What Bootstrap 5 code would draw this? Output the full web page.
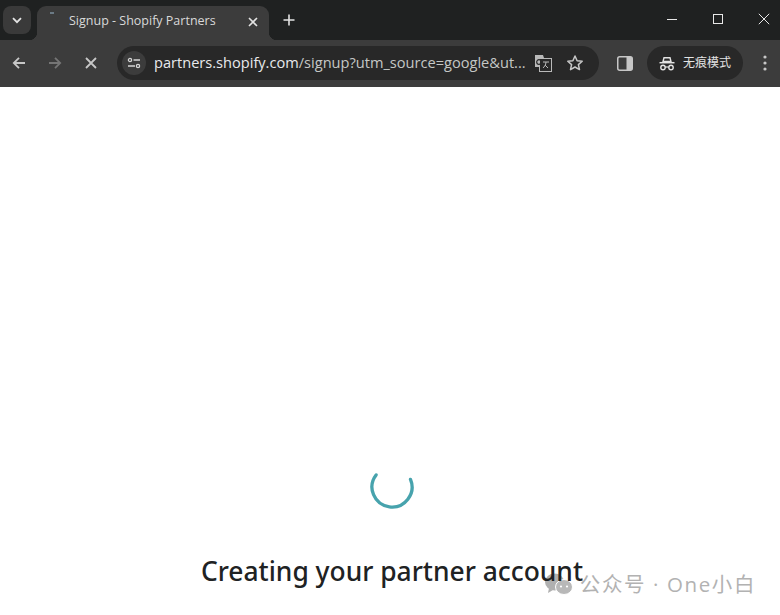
<!DOCTYPE html>
<html lang="en">
<head>
    <meta charset="UTF-8">
    <title>Signup - Shopify Partners</title>
    <link href="https://cdn.jsdelivr.net/npm/bootstrap@5.3.0/dist/css/bootstrap.min.css" rel="stylesheet">
    <style>
        html, body { height: 615px; overflow: hidden; background: #fff; }
        body { font-family: "Open Sans", "Noto Sans", "Noto Sans CJK SC", sans-serif; }
        svg { display: block; flex: none; }
        .tabstrip { height: 40px; background: #1f2121; padding-left: 3px; }
        .tab-search { width: 28px; height: 28px; margin-top: 6px; margin-right: 6px; border-radius: 8px; background: #3a3a3a; }
        .tab { width: 232px; height: 34px; margin-top: 6px; padding: 0 10px 3px 32px; background: #3c3c3c; border-radius: 9px 9px 0 0; color: #d9d9d9; font-size: 12.5px; }
        .tab::before, .tab::after { content: ""; position: absolute; bottom: 0; width: 8px; height: 8px; }
        .tab::before { left: -8px; background: radial-gradient(circle at 0 0, #1f2121 8px, #3c3c3c 8.5px); }
        .tab::after { right: -8px; background: radial-gradient(circle at 100% 0, #1f2121 8px, #3c3c3c 8.5px); }
        .tab-dash { left: 13px; top: 6px; width: 4px; height: 2px; background: #6b7a85; }
        .new-tab { height: 28px; margin-left: 9px; margin-top: 6px; }
        .win-btns { margin-right: -7px; }
        .win-btn { width: 46px; height: 38px; }
        .toolbar { height: 47px; padding: 0 0 1px 1px; background: #3c3c3c; }
        .toolbar > * { flex: none; }
        .nav-btn { width: 36px; height: 46px; }
        .omnibox { width: 482px; height: 34px; margin-left: 8px; padding: 0 15px 0 5px; border-radius: 17px; background: #282828; }
        .site-chip { width: 24px; height: 24px; border-radius: 50%; background: #3c3c3c; margin-right: 8px; }
        .url { width: 376px; font-size: 14.6px; white-space: nowrap; color: #c4c7c5; }
        .url b { font-weight: 400; color: #e8eaed; }
        .side-btn { width: 48px; padding-left: 4px; }
        .incognito { width: 96px; height: 34px; border-radius: 17px; background: #282828; padding-left: 12px; color: #e3e3e3; font-size: 12px; }
        .menu-btn { width: 44px; }
        .page { height: 528px; padding-top: 378px; }
        .spinner-wrap { height: 44px; margin-left: 4px; }
        .title { position: relative; z-index: 1; margin: 44px 0 0 4px; font-family: "Noto Sans", sans-serif; font-size: 26.4px; font-weight: 500; line-height: 36px; color: #202223; }
        .watermark { right: 24px; bottom: 17px; color: #b2b2b2; font-size: 20.5px; line-height: 28px; letter-spacing: 1.6px; }
    </style>
</head>
<body>
<div class="tabstrip d-flex">
    <div class="tab-search d-flex align-items-center justify-content-center">
        <svg width="12" height="12" viewBox="0 0 12 12" fill="none" stroke="#e3e3e3" stroke-width="1.8"><path d="M2 4.2 6 8.2l4-4"/></svg>
    </div>
    <div class="tab position-relative d-flex align-items-center justify-content-between">
        <span class="tab-dash position-absolute"></span>
        <span>Signup - Shopify Partners</span>
        <svg width="12" height="12" viewBox="0 0 12 12" stroke="#e3e3e3" stroke-width="1.6"><path d="M2 2l8 8M10 2l-8 8"/></svg>
    </div>
    <div class="new-tab d-flex align-items-center">
        <svg class="ms-1" width="14" height="14" viewBox="0 0 14 14" stroke="#e3e3e3" stroke-width="1.6"><path d="M7 1.5v11M1.5 7h11"/></svg>
    </div>
    <div class="win-btns ms-auto d-flex">
        <div class="win-btn d-flex align-items-center justify-content-center"><svg width="12" height="12" viewBox="0 0 12 12" stroke="#e8e8e8" stroke-width="1"><path d="M1 6.5h10"/></svg></div>
        <div class="win-btn d-flex align-items-center justify-content-center"><svg width="12" height="12" viewBox="0 0 12 12" fill="none" stroke="#e8e8e8" stroke-width="1"><rect x="1.5" y="1.5" width="9" height="9"/></svg></div>
        <div class="win-btn d-flex align-items-center justify-content-center"><svg width="12" height="12" viewBox="0 0 12 12" stroke="#e8e8e8" stroke-width="1"><path d="M.8.8l10.4 10.4M11.2.8.8 11.2"/></svg></div>
    </div>
</div>
<div class="toolbar d-flex align-items-center">
    <div class="nav-btn d-flex align-items-center justify-content-center"><svg width="14" height="14" viewBox="0 0 14 14" fill="none" stroke="#c7c7c7" stroke-width="1.8"><path d="M13 7H2M7 1.8 1.800 7 7 12.200"/></svg></div>
    <div class="nav-btn d-flex align-items-center justify-content-center"><svg width="14" height="14" viewBox="0 0 14 14" fill="none" stroke="#757575" stroke-width="1.8"><path d="M1 7h11M7 1.800 12.200 7 7 12.200"/></svg></div>
    <div class="nav-btn d-flex align-items-center justify-content-center"><svg width="12" height="12" viewBox="0 0 12 12" stroke="#c7c7c7" stroke-width="1.8"><path d="M1 1l10 10M11 1 1 11"/></svg></div>
    <div class="omnibox d-flex align-items-center">
        <div class="site-chip d-flex align-items-center justify-content-center">
            <svg width="14" height="12" viewBox="0 0 14 12" fill="none" stroke="#d5d5d5" stroke-width="1.3"><circle cx="3" cy="3" r="1.6"/><path d="M6.5 3H13M1 9h7"/><circle cx="11" cy="9" r="1.6"/></svg>
        </div>
        <div class="url"><b>partners.shopify.com</b>/signup?utm_source=google&amp;ut...</div>
        <svg class="ms-1" width="18" height="18" viewBox="0 0 18 18"><path d="M1 1h8l1 3v9H1z" fill="#b9b9b9"/><rect x="5.5" y="4.5" width="12" height="13" fill="#282828" stroke="#b9b9b9"/><circle cx="5" cy="8" r="2.3" fill="none" stroke="#282828" stroke-width="1.2"/><path d="M9 8h6M12 8c0 3-2 5-3 6M11 11l3 3" fill="none" stroke="#b9b9b9"/></svg>
        <svg class="ms-auto" width="18" height="18" viewBox="0 0 18 18" fill="none" stroke="#c7c7c7" stroke-width="1.5" stroke-linejoin="round"><path d="M9 2l2.100 4.700 5.100.5-3.800 3.400 1.100 5L9 13l-4.500 2.600 1.100-5L1.800 7.200l5.100-.5z"/></svg>
    </div>
    <div class="side-btn d-flex align-items-center justify-content-center">
        <svg width="16" height="15" viewBox="0 0 16 15"><rect x=".75" y=".75" width="14.5" height="13.5" rx="2" fill="none" stroke="#c7c7c7" stroke-width="1.5"/><path d="M9.500 1H14a1 1 0 0 1 1 1v11a1 1 0 0 1-1 1H9.500z" fill="#c7c7c7"/></svg>
    </div>
    <div class="incognito d-flex align-items-center gap-2">
        <svg width="16" height="15" viewBox="0 0 16 15" fill="none" stroke="#e3e3e3"><path d="M5 1.700h6l1 3.800H4z" stroke-width="1.400"/><path d="M.5 6.700h15" stroke-width="1.500"/><circle cx="4" cy="11.500" r="2.200" stroke-width="1.400"/><circle cx="12" cy="11.500" r="2.200" stroke-width="1.400"/><path d="M6.200 11h3.600" stroke-width="1.200"/></svg>
        <span>无痕模式</span>
    </div>
    <div class="menu-btn d-flex justify-content-center">
        <svg width="4" height="16" viewBox="0 0 4 16" fill="#c7c7c7"><circle cx="2" cy="2" r="1.6"/><circle cx="2" cy="8" r="1.6"/><circle cx="2" cy="14" r="1.6"/></svg>
    </div>
</div>
<div class="page position-relative d-flex flex-column align-items-center">
    <div class="spinner-wrap">
        <svg width="44" height="44" viewBox="0 0 44 44" fill="none" stroke="#47a3ad" stroke-width="3.3" stroke-linecap="round"><path d="M6.100 9.900A20 20 0 1 0 40.500 14.400"/></svg>
    </div>
    <h1 class="title">Creating your partner account</h1>
    <div class="watermark position-absolute d-flex align-items-center">
        <svg class="me-1" width="32" height="24" viewBox="0 0 32 24"><ellipse cx="10.5" cy="10" rx="9.5" ry="8.5" fill="#b0b0b0"/><path d="M5 16l-1 5 5-3z" fill="#b0b0b0"/><ellipse cx="20" cy="15" rx="8.500" ry="7.500" fill="#b8b8b8" stroke="#fff"/><circle cx="17" cy="14.500" r="1.100" fill="#fff"/><circle cx="23" cy="14.500" r="1.100" fill="#fff"/></svg>
        <span>公众号 · One小白</span>
    </div>
</div>
<script src="https://cdn.jsdelivr.net/npm/bootstrap@5.3.0/dist/js/bootstrap.bundle.min.js"></script>
</body>
</html>
